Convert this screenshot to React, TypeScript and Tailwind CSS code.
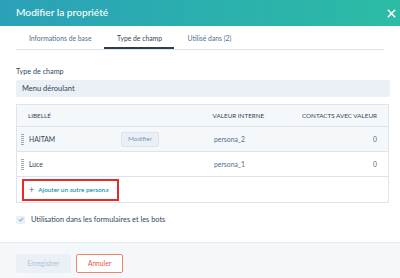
import React from "react";

const rows = [
  { label: "HAITAM", value: "persona_2", count: 0, hover: true },
  { label: "Luce", value: "persona_1", count: 0, hover: false },
];

const DragHandle = () => (
  <div className="flex w-[3px] flex-col gap-[1px]">
    {Array.from({ length: 6 }).map((_, i) => (
      <div key={i} className="h-[1px] w-[3px] bg-[#9aa9b8]" />
    ))}
  </div>
);

export default function App() {
  return (
    <div className="flex h-[278px] w-[400px] flex-col whitespace-nowrap bg-white font-['Lato',sans-serif] text-[#33475b]">
      {/* Header */}
      <div className="flex h-[26px] shrink-0 items-center justify-between bg-gradient-to-r from-[#2ba1b8] to-[#2cbca4] pl-4 pr-[3px]">
        <span className="text-[10.2px] font-medium text-white">Modifier la propriété</span>
        <svg width="11" height="11" viewBox="0 0 12 12">
          <path d="M2 2 L10 10 M10 2 L2 10" stroke="white" strokeWidth="1.6" />
        </svg>
      </div>

      {/* Tabs */}
      <div className="mx-4 flex h-[24px] items-end border-b border-[#dfe3eb] pl-[13px] text-[6.8px]">
        <div className="flex h-full items-center pt-[2px] text-[#516f90]">Informations de base</div>
        <div className="ml-[13px] flex h-full w-[70px] items-center justify-center border-b-2 border-[#2d3e50] pt-[3px] text-[#33475b]">
          Type de champ
        </div>
        <div className="ml-[13px] flex h-full items-center pt-[2px] text-[#516f90]">Utilisé dans (2)</div>
      </div>

      {/* Body */}
      <div className="flex flex-1 flex-col px-4 pt-[17px]">
        <div className="text-[7.2px] leading-[10px]">Type de champ</div>
        <div className="mt-[3px] flex h-[17px] w-[374px] items-center rounded-[2px] bg-[#eaf0f6] px-[6px] text-[7.5px] text-[#33475b]">
          Menu déroulant
        </div>

        <div className="mt-[7px] w-[373px] border border-[#dfe3eb]">
          <div className="flex h-[21px] items-center bg-[#f5f8fa] text-[6.3px] text-[#33475b]">
            <div className="w-[197px] pl-[11px]">LIBELLÉ</div>
            <div className="w-[90px]">VALEUR INTERNE</div>
            <div className="flex-1 pr-[11px] text-right">CONTACTS AVEC VALEUR</div>
          </div>
          {rows.map((r) => (
            <div
              key={r.value}
              className={`flex h-[25px] items-center border-t border-[#dfe3eb] text-[6.8px] ${r.hover ? "bg-[#f5f8fa]" : "bg-white"}`}
            >
              <div className="flex w-[197px] items-center pl-[4px]">
                <DragHandle />
                <span className="ml-[5px] w-[92px]">{r.label}</span>
                {r.hover && (
                  <div className="flex h-[15px] w-[38px] items-center justify-center rounded-[2px] border border-[#dfe3eb] bg-[#eaf0f6] text-[6.4px] text-[#7c98b6]">
                    Modifier
                  </div>
                )}
              </div>
              <div className="w-[90px] text-[#516f90]">{r.value}</div>
              <div className="flex-1 pr-[11px] text-right text-[#516f90]">{r.count}</div>
            </div>
          ))}
          <div className="flex h-[26px] items-center border-t border-[#dfe3eb] pl-[5px]">
            <div className="flex h-[22px] w-[97px] items-center border-2 border-[#e62b2b] pl-[5px] text-[6.4px] font-medium text-[#0091ae]">
              <span className="mr-[4px] text-[9px] font-normal leading-none text-[#516f90]">+</span>
              Ajouter un autre persona
            </div>
          </div>
        </div>

        <div className="mt-[11px] flex items-center">
          <div className="flex h-[8px] w-[9px] items-center justify-center rounded-[1px] bg-[#eaf0f6]">
            <svg width="6" height="5" viewBox="0 0 6 5">
              <path d="M0.8 2.6 L2.3 4 L5.2 1" fill="none" stroke="#99afc4" strokeWidth="1.1" />
            </svg>
          </div>
          <span className="ml-[6px] text-[7.4px] text-[#33475b]">Utilisation dans les formulaires et les bots</span>
        </div>
      </div>

      {/* Footer */}
      <div className="flex h-[36px] shrink-0 items-start gap-[5px] border-t border-[#e5eaf0] bg-[#f5f8fa] px-4 pt-[11px]">
        <div className="flex h-[19px] w-[55px] items-center justify-center rounded-[2px] bg-[#eaf0f6] text-[6.7px] text-[#b0c1d4]">
          Enregistrer
        </div>
        <div className="flex h-[19px] w-[47px] items-center justify-center rounded-[2px] border border-[#f2836b] bg-white text-[6.7px] text-[#e8593c]">
          Annuler
        </div>
      </div>
    </div>
  );
}
